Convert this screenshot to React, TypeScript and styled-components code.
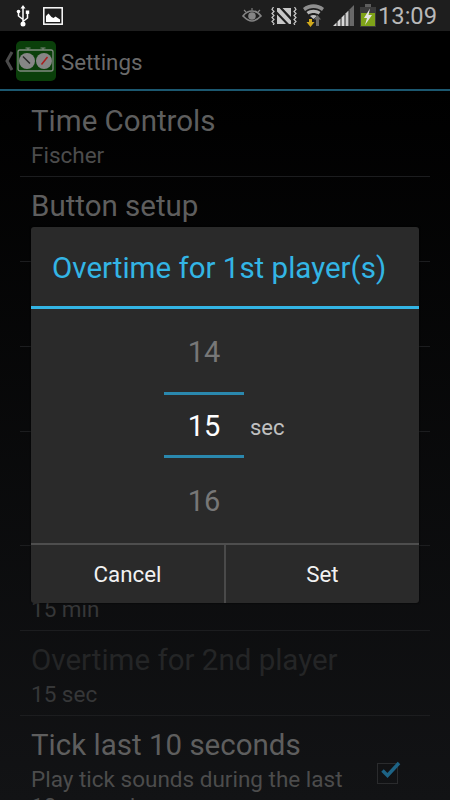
import React from 'react';
import styled, { createGlobalStyle } from 'styled-components';

const GlobalStyle = createGlobalStyle`
    html, body {
        margin: 0;
        padding: 0;
        background: #000;
    }
    body {
        font-family: Roboto, 'Liberation Sans', sans-serif;
    }
`;

type RowData = { title: string; summary?: string; dimTitle?: boolean; dimSummary?: boolean; height: number };

const ROWS: RowData[] = [
    { title: 'Time Controls', summary: 'Fischer', height: 85 },
    { title: 'Button setup', summary: 'Tap', height: 85 },
    { title: '', height: 85 },
    { title: '', height: 85 },
    { title: '', height: 114 },
    { title: 'Time for 2nd player', summary: '15 min', dimSummary: true, height: 85 },
    { title: 'Overtime for 2nd player', summary: '15 sec', dimTitle: true, dimSummary: true, height: 85 },
];

const UsbIcon = () => (
    <svg width="14" height="22" viewBox="0 0 14 22">
        <path d="M7 2v16M7 14.500L2.500 11V7M7 16.500l4.500-3.500V8" fill="none" stroke="#fff" strokeWidth="1.500" />
        <path d="M7 0l2.500 3.500h-5z" fill="#fff" />
        <circle cx="2.500" cy="6.500" r="1.800" fill="#fff" />
        <rect x="9.800" y="5.500" width="3.400" height="3.400" fill="#fff" />
        <circle cx="7" cy="19" r="2.500" fill="#fff" />
    </svg>
);

const PictureIcon = () => (
    <svg width="20" height="18" viewBox="0 0 20 18">
        <rect x="0.800" y="0.800" width="18.400" height="16.400" fill="#1e1e1e" stroke="#fff" strokeWidth="1.500" />
        <path d="M3 15V9l2.500-2.500L8.500 10l2 1 2-1.500 4.500 3V15z" fill="#fff" />
    </svg>
);

const EyeIcon = () => (
    <svg width="20" height="15" viewBox="0 0 20 15">
        <path d="M1 8c3-4 6-5 9-5s6 1 9 5c-3 3-6 5-9 5s-6-2-9-5z" fill="none" stroke="#858585" strokeWidth="1.700" />
        <circle cx="10" cy="8" r="3.800" fill="#858585" />
        <path d="M2 2l2 2M10 0v2.500M18 2l-2 2" stroke="#858585" strokeWidth="1.100" />
    </svg>
);

const VibrateMuteIcon = () => (
    <svg width="26" height="18" viewBox="0 0 26 18">
        <path d="M2.500 0L1 2.500l2 2-2 2 2 2-2 2 2 2-2 2 2 2-1 2M23.500 0L25 2.500l-2 2 2 2-2 2 2 2-2 2 2 2-2 2 1 2" fill="none" stroke="#c8c8c8" strokeWidth="1.200" />
        <path d="M6 1h2.500L20 13.500V17h-2L6 4.500zM6 7.500L15 17H6zM11.500 1H20v9z" fill="#c8c8c8" />
    </svg>
);

const WifiIcon = () => (
    <svg width="21" height="23" viewBox="0 0 21 23">
        <path d="M0 4c6-5 15-5 21 0l-2 3C14 3 7 3 2 7z" fill="#8e8e8e" />
        <path d="M3.500 8c4-3 10-3 14 0l-2 2.500c-3-2-7-2-10 0z" fill="#b4b4b4" />
        <path d="M7 12c2-1.300 5-1.300 7 0l-3.500 3z" fill="#c0c0c0" />
        <path d="M6 15h3v3h2.500L7.500 23l-4-5H6z" fill="#d0a91c" />
        <path d="M14.500 11l3.500 4.500h-2V22h-3v-6.500h-2z" fill="#6a6a6a" />
    </svg>
);

const SignalIcon = () => (
    <svg width="21" height="21" viewBox="0 0 21 21">
        <path d="M0 21l3.500-3.500V21zM4.500 21v-4.500l3-3V21zM8.500 21v-8.500l3-3V21z" fill="#d8d8d8" />
        <path d="M12.500 21V8.500l3-3V21z" fill="#cacaca" />
        <path d="M16.500 21V4.500L21 0v21z" fill="#686868" />
    </svg>
);

const BatteryIcon = () => (
    <svg width="16" height="23" viewBox="0 0 16 23">
        <rect x="5" y="0" width="6" height="3" fill="#5e5e5e" />
        <rect x="0" y="3" width="16" height="20" fill="#3c3c3c" />
        <rect x="1" y="9" width="14" height="13" fill="#7fa319" />
        <path d="M10 4.500L4 14h3l-2 7 7-10H8.500z" fill="#e4e4e4" />
    </svg>
);

const BackArrow = () => (
    <svg width="12" height="20" viewBox="0 0 12 20">
        <path d="M8 1L3 10l5 9" fill="none" stroke="#4a4a4a" strokeWidth="3" />
    </svg>
);

const ClockLogo = () => (
    <svg width="40" height="40" viewBox="0 0 40 40">
        <rect width="40" height="40" rx="5" fill="#0a3f0a" />
        <rect x="2" y="9" width="35" height="21" rx="2" fill="none" stroke="#7f8a7f" strokeWidth="1.300" />
        <path d="M12 9V7M9.500 7h5M27 9V7M24.500 7h5" stroke="#7f8a7f" strokeWidth="1.100" />
        <circle cx="11" cy="20" r="8" fill="#868686" />
        <circle cx="28" cy="20" r="8" fill="#868686" />
        <path d="M7 15.500l7 7" stroke="#2a2a2a" strokeWidth="1.500" />
        <path d="M25.500 23.500l6-7.500" stroke="#a81e1e" strokeWidth="1.500" />
    </svg>
);

const App: React.FC = () => {
    return (
        <Screen>
            <GlobalStyle />
            <StatusBar>
                <StatusGroup>
                    <StatusSlot $gap={13}>
                        <UsbIcon />
                    </StatusSlot>
                    <StatusSlot>
                        <PictureIcon />
                    </StatusSlot>
                </StatusGroup>
                <StatusGroup>
                    <StatusSlot $gap={9}>
                        <EyeIcon />
                    </StatusSlot>
                    <StatusSlot $gap={6}>
                        <VibrateMuteIcon />
                    </StatusSlot>
                    <StatusSlot $gap={9}>
                        <WifiIcon />
                    </StatusSlot>
                    <StatusSlot $gap={6}>
                        <SignalIcon />
                    </StatusSlot>
                    <StatusSlot $gap={2}>
                        <BatteryIcon />
                    </StatusSlot>
                    <Clock>13:09</Clock>
                </StatusGroup>
            </StatusBar>
            <ActionBar>
                <BackArrow />
                <ClockLogo />
                <ActionTitle>Settings</ActionTitle>
            </ActionBar>
            <List>
                {ROWS.map((row, i) => (
                    <Row key={i} $height={row.height}>
                        <RowTitle $dim={row.dimTitle}>{row.title}</RowTitle>
                        {row.summary && <RowSummary $dim={row.dimSummary}>{row.summary}</RowSummary>}
                    </Row>
                ))}
                <CheckRow>
                    <CheckText>
                        <RowTitle>Tick last 10 seconds</RowTitle>
                        <RowSummary>Play tick sounds during the last 10 seconds</RowSummary>
                    </CheckText>
                    <CheckBox>
                        <svg width="22" height="18" viewBox="0 0 22 18">
                            <path d="M2.500 9.500l5 5L19 2" fill="none" stroke="#1d6385" strokeWidth="3.500" />
                        </svg>
                    </CheckBox>
                </CheckRow>
            </List>
            <Dialog>
                <DialogTitle>Overtime for 1st player(s)</DialogTitle>
                <Picker>
                    <PickerColumn>
                        <PickerValue $height={83} $offset={4}>14</PickerValue>
                        <PickerCurrent $height={66} $offset={2}>15</PickerCurrent>
                        <PickerValue $height={85} $offset={2}>16</PickerValue>
                    </PickerColumn>
                    <PickerUnit>sec</PickerUnit>
                </Picker>
                <DialogButtons>
                    <DialogButton>Cancel</DialogButton>
                    <DialogButton>Set</DialogButton>
                </DialogButtons>
            </Dialog>
        </Screen>
    );
};

const Screen = styled.div`
    position: relative;
    width: 450px;
    height: 800px;
    overflow: hidden;
    background: linear-gradient(180deg, #000 91px, #121315 800px);
`;

const StatusBar = styled.div`
    height: 31px;
    box-sizing: border-box;
    padding: 0 13px 0 16px;
    background: #1e1e1e;
    display: flex;
    align-items: center;
    justify-content: space-between;
`;

const StatusGroup = styled.div`
    display: flex;
    align-items: center;
`;

const StatusSlot = styled.span<{ $gap?: number }>`
    display: flex;
    margin-right: ${(props) => props.$gap ?? 0}px;
`;

const Clock = styled.span`
    font-size: 23.7px;
    color: #b8b8b8;
`;

const ActionBar = styled.div`
    height: 60px;
    box-sizing: border-box;
    border-bottom: 2px solid #1c5870;
    padding: 2px 0 0 4px;
    display: flex;
    align-items: center;
    background: #000;
`;

const ActionTitle = styled.span`
    margin: 2px 0 0 5px;
    font-size: 22.3px;
    color: #6a6a6a;
`;

const List = styled.div`
    padding: 1px 20px 0;
`;

const Row = styled.div<{ $height: number }>`
    height: ${(props) => props.$height}px;
    box-sizing: border-box;
    padding: 11px 11px 0;
    border-bottom: 1px solid #1c1d1f;
`;

const RowTitle = styled.div<{ $dim?: boolean }>`
    font-size: 29.5px;
    line-height: 36px;
    color: ${(props) => (props.$dim ? '#242526' : '#5e5e5e')};
`;

const RowSummary = styled.div<{ $dim?: boolean }>`
    margin-top: 3px;
    font-size: 22.5px;
    line-height: 27px;
    color: ${(props) => (props.$dim ? '#363738' : '#4c4c4c')};
`;

const CheckRow = styled.div`
    display: flex;
    align-items: center;
    padding: 11px 11px 0;
`;

const CheckText = styled.div`
    flex: 1;
`;

const CheckBox = styled.div`
    width: 19px;
    height: 19px;
    border: 1px solid #2a2b2d;
    position: relative;
    margin: 0 21px 0 23px;
    & > svg {
        position: absolute;
        left: 2px;
        top: -3px;
    }
`;

const Dialog = styled.div`
    position: absolute;
    left: 31px;
    top: 227px;
    width: 388px;
    height: 376px;
    background: #2a2a2a;
    border-radius: 3px;
    box-shadow: 0 0 2px #000;
    display: flex;
    flex-direction: column;
`;

const DialogTitle = styled.div`
    height: 83px;
    box-sizing: border-box;
    padding: 4px 21px 0;
    border-bottom: 3px solid #33b5e5;
    display: flex;
    align-items: center;
    font-size: 29.5px;
    color: #33b5e5;
`;

const Picker = styled.div`
    flex: 1;
    display: flex;
    align-items: flex-start;
    padding-left: 133px;
`;

const PickerColumn = styled.div`
    width: 80px;
    display: flex;
    flex-direction: column;
`;

const PickerValue = styled.div<{ $height: number; $offset: number }>`
    height: ${(props) => props.$height}px;
    box-sizing: border-box;
    padding-top: ${(props) => props.$offset}px;
    display: flex;
    align-items: center;
    justify-content: center;
    font-size: 29px;
    color: #777;
`;

const PickerCurrent = styled(PickerValue)`
    border-top: 3px solid #2a88ae;
    border-bottom: 3px solid #2a88ae;
    color: #fff;
`;

const PickerUnit = styled.span`
    margin: 106px 0 0 6px;
    font-size: 22px;
    line-height: 26px;
    color: #c0c0c0;
`;

const DialogButtons = styled.div`
    height: 61px;
    box-sizing: border-box;
    display: flex;
    border-top: 2px solid #4e4e4e;
`;

const DialogButton = styled.div`
    flex: 1;
    display: flex;
    align-items: center;
    justify-content: center;
    font-size: 22.3px;
    color: #f2f2f2;
    & + & {
        border-left: 2px solid #4a4a4a;
    }
`;

export default App;
